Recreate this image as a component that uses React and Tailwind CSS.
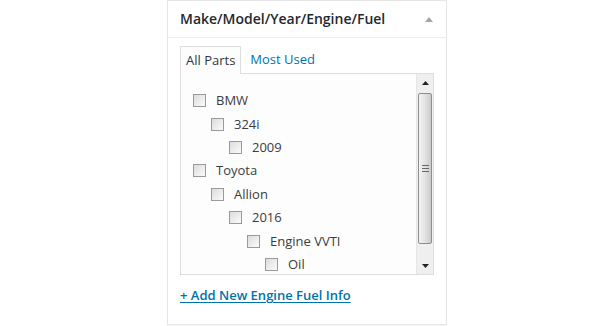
import React from 'react'

const tree = [
  { label: 'BMW', depth: 0 },
  { label: '324i', depth: 1 },
  { label: '2009', depth: 2 },
  { label: 'Toyota', depth: 0 },
  { label: 'Allion', depth: 1 },
  { label: '2016', depth: 2 },
  { label: 'Engine VVTI', depth: 3 },
  { label: 'Oil', depth: 4 },
]

const indents = ['pl-0', 'pl-[18px]', 'pl-[36px]', 'pl-[54px]', 'pl-[72px]']

function Checkbox() {
  return (
    <span className="w-[13px] h-[13px] border border-[#9a9a9a] bg-gradient-to-br from-[#dcdcdc] to-[#fbfbfb] flex-none" />
  )
}

function Scrollbar() {
  return (
    <div className="w-[17px] h-full flex flex-col bg-[#efefef] border-l border-[#e6e6e6]">
      <div className="h-[17px] flex items-center justify-center">
        <svg width="7" height="4" viewBox="0 0 7 4"><path d="M3.5 0L7 4H0z" fill="#222" /></svg>
      </div>
      <div className="flex-1 px-[1px] py-[1px]">
        <div className="h-[151px] mt-[1px] rounded-[2px] border border-[#8e8e8e] bg-gradient-to-r from-[#f4f4f4] via-[#e2e2e2] to-[#cacaca] flex items-center justify-center">
          <div className="flex flex-col gap-[2px]">
            <span className="w-[7px] h-[1px] bg-[#666]" />
            <span className="w-[7px] h-[1px] bg-[#666]" />
            <span className="w-[7px] h-[1px] bg-[#666]" />
          </div>
        </div>
      </div>
      <div className="h-[17px] flex items-center justify-center">
        <svg width="7" height="4" viewBox="0 0 7 4"><path d="M0 0H7L3.5 4z" fill="#222" /></svg>
      </div>
    </div>
  )
}

export default function App() {
  return (
    <div className="w-[615px] h-[326px] bg-white" style={{ fontFamily: '"Open Sans", sans-serif' }}>
      <div className="ml-[167px] w-[280px] h-[325px] border border-[#e5e5e5] bg-white shadow-[0_1px_1px_rgba(0,0,0,0.04)]">
        <div className="h-[37px] border-b border-[#eeeeee] flex items-center justify-between pl-[12px] pr-[13px]">
          <h2 className="text-[14px] font-semibold text-[#23282d] leading-none">Make/Model/Year/Engine/Fuel</h2>
          <svg width="8" height="5" viewBox="0 0 8 5"><path d="M4 0L8 5H0z" fill="#a0a5aa" /></svg>
        </div>
        <div className="px-[12px] pt-[8px]">
          <div className="flex items-end text-[13px] leading-[19px]">
            <span className="relative z-10 -mb-px h-[28px] px-[5px] pt-[4px] border border-b-0 border-[#dddddd] bg-[#fdfdfd] text-[#32373c]">All Parts</span>
            <span className="px-[9px] h-[27px] pt-[4px] text-[#0073aa]">Most Used</span>
          </div>
          <div className="h-[202px] border border-[#dddddd] bg-[#fdfdfd] flex">
            <ul className="flex-1 pt-[15px] pl-[12px] text-[13px] text-[#3c3c3c]">
              {tree.map((item) => (
                <li key={item.label} className={`h-[23.43px] flex items-center ${indents[item.depth]}`}>
                  <Checkbox />
                  <span className="ml-[10px] leading-none">{item.label}</span>
                </li>
              ))}
            </ul>
            <Scrollbar />
          </div>
          <a className="inline-block mt-[11px] text-[13px] leading-[19px] font-semibold text-[#0073aa] underline underline-offset-2">+ Add New Engine Fuel Info</a>
        </div>
      </div>
    </div>
  )
}
